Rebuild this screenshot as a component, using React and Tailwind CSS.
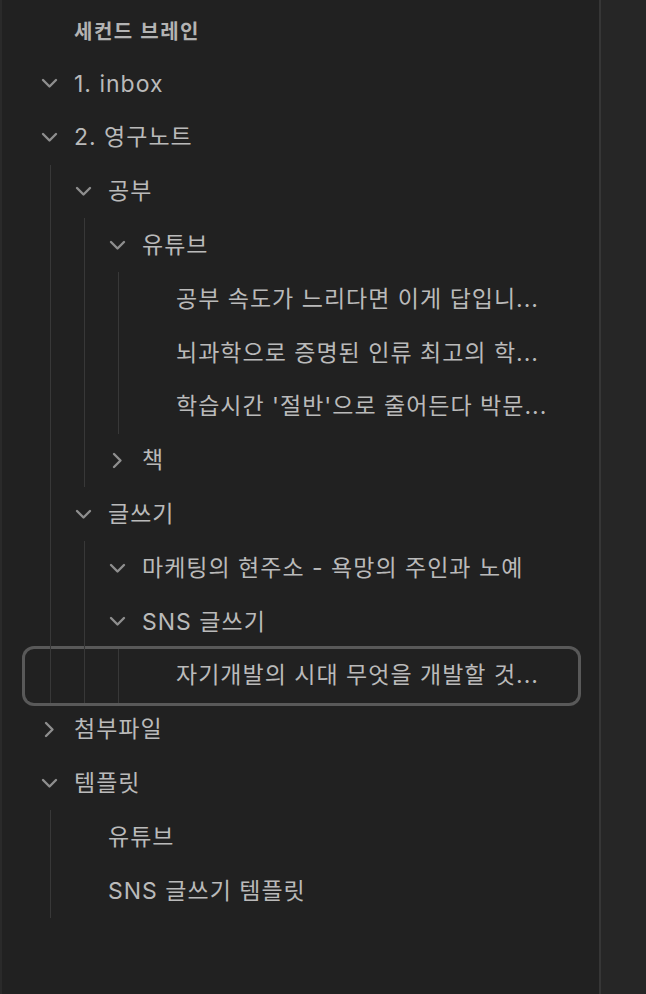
const tree = [
  { label: "1. inbox", open: true, children: [] },
  {
    label: "2. 영구노트",
    open: true,
    children: [
      {
        label: "공부",
        open: true,
        children: [
          {
            label: "유튜브",
            open: true,
            children: [
              { label: "공부 속도가 느리다면 이게 답입니..." },
              { label: "뇌과학으로 증명된 인류 최고의 학..." },
              { label: "학습시간 '절반'으로 줄어든다 박문..." },
            ],
          },
          { label: "책", open: false, children: [] },
        ],
      },
      {
        label: "글쓰기",
        open: true,
        children: [
          { label: "마케팅의 현주소 - 욕망의 주인과 노예", open: true, children: [] },
          {
            label: "SNS 글쓰기",
            open: true,
            children: [{ label: "자기개발의 시대 무엇을 개발할 것...", active: true }],
          },
        ],
      },
    ],
  },
  { label: "첨부파일", open: false, children: [] },
  {
    label: "템플릿",
    open: true,
    children: [{ label: "유튜브" }, { label: "SNS 글쓰기 템플릿" }],
  },
];

const ChevronDown = () => (
  <svg width="17" height="11" viewBox="0 0 17 11" fill="none">
    <polyline
      points="2,2 8.5,8.5 15,2"
      stroke="#8e8e8e"
      strokeWidth="2.4"
      strokeLinecap="round"
      strokeLinejoin="round"
    />
  </svg>
);

const ChevronRight = () => (
  <svg width="11" height="17" viewBox="0 0 11 17" fill="none">
    <polyline
      points="2,2 8.5,8.5 2,15"
      stroke="#8e8e8e"
      strokeWidth="2.4"
      strokeLinecap="round"
      strokeLinejoin="round"
    />
  </svg>
);

// flatten the tree into rows with their depth
const flatten = (nodes, depth = 0, out = []) => {
  nodes.forEach((n) => {
    out.push({ ...n, depth });
    if (n.children && n.open) flatten(n.children, depth + 1, out);
  });
  return out;
};

const Row = ({ item }) => {
  const isFolder = Array.isArray(item.children);
  return (
    <div
      className={
        "flex h-[53.8px] items-center pl-[7px] rounded-[9px] " +
        (item.active ? "ring-[3px] ring-[#595959]" : "")
      }
    >
      {Array.from({ length: item.depth }).map((_, i) => (
        <div key={i} className="flex h-full w-[34px] shrink-0 pl-[18px]">
          <div className="h-full w-px bg-[#383838]" />
        </div>
      ))}
      <div className="flex w-[34px] shrink-0 items-center justify-center">
        {isFolder && (item.open ? <ChevronDown /> : <ChevronRight />)}
      </div>
      <div className="ml-[8px] whitespace-nowrap text-[23px] tracking-[1px] text-[#bababa]">
        {item.label}
      </div>
    </div>
  );
};

export default function App() {
  const rows = flatten(tree);

  return (
    <div
      className="flex h-[994px] w-[646px] bg-[#212121]"
      style={{ fontFamily: 'Inter, "Noto Sans CJK KR", sans-serif' }}
    >
      <div className="w-[599px] shrink-0 border-l-2 border-[#2a2a2a]">
        {/* Vault title */}
        <div className="flex h-[57px] items-center pl-[72px] pt-[7px] text-[20px] tracking-[1.5px] font-semibold text-[#b3b3b3]">
          세컨드 브레인
        </div>

        <div className="ml-[23px] w-[553px]">
          {rows.map((r, i) => (
            <Row key={i} item={r} />
          ))}
        </div>
      </div>

      <div className="w-[2px] shrink-0 bg-[#363636]" />
      <div className="flex-1 bg-[#262626]" />
    </div>
  );
}
